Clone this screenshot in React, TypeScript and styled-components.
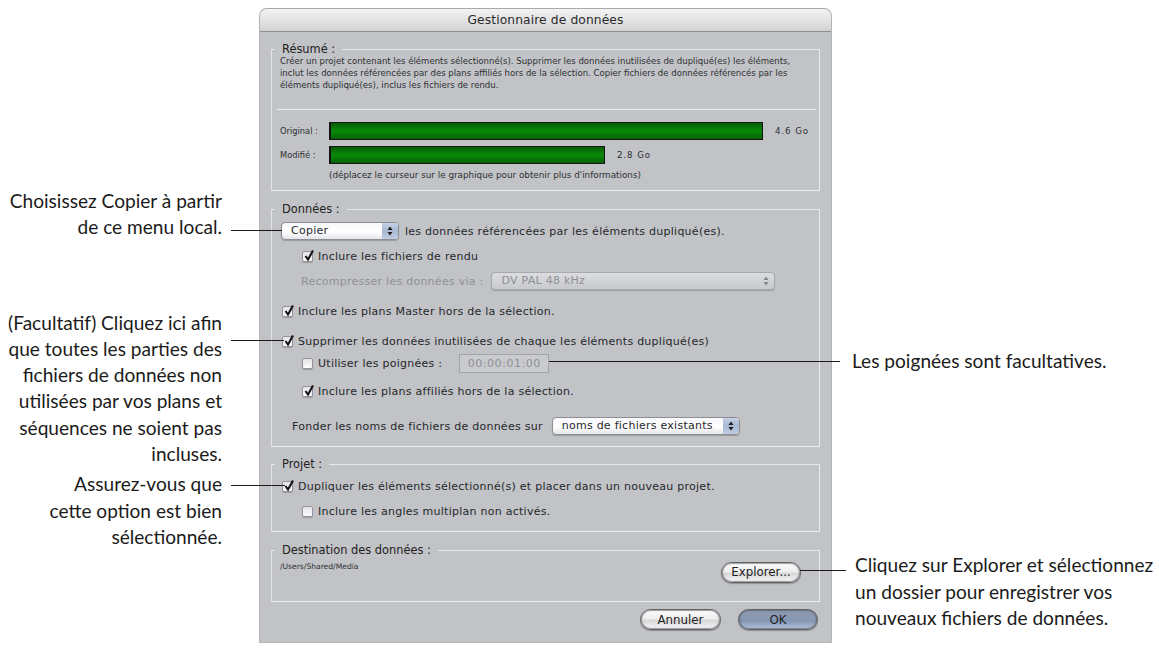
import React from "react";
import styled, { createGlobalStyle } from "styled-components";

const Global = createGlobalStyle`
  html, body { margin: 0; padding: 0; background: #fff; }
  #root { width: 1159px; height: 648px; overflow: hidden; }
`;

const Page = styled.div`
  position: relative;
  display: flex;
  align-items: flex-start;
  width: 1159px;
  height: 648px;
  font-family: "DejaVu Sans", sans-serif;
  color: #26282b;
`;

const LeftColumn = styled.div`
  width: 222px;
  flex: none;
  text-align: right;
`;

const RightColumn = styled.div`
  margin-left: 20px;
  flex: none;
`;

const Caption = styled.p<{ $top: number; $indent?: number }>`
  margin: ${(p) => p.$top}px 0 0 ${(p) => p.$indent ?? 0}px;
  font-family: "Lato", sans-serif;
  font-size: 19.1px;
  line-height: 26.3px;
  color: #1b1b1b;
  white-space: pre-line;
`;

const Dialog = styled.div`
  flex: none;
  width: 573px;
  height: 635px;
  margin: 8px 0 0 37px;
  box-sizing: border-box;
  background: #c1c3c6;
  border: 1px solid #b4b5b7;
  border-top-color: #a9a9a9;
  border-radius: 8px 8px 0 0;
  overflow: hidden;
`;

const TitleBar = styled.div`
  height: 22px;
  line-height: 22px;
  text-align: center;
  font-size: 12.3px;
  letter-spacing: 0.1px;
  color: #2b2b2b;
  background: linear-gradient(#f4f4f4, #d2d3d4);
  border-bottom: 1px solid #8e8f91;
`;

const Body = styled.div`
  padding: 0 11px;
`;

const Group = styled.fieldset<{ $top: number; $height: number }>`
  box-sizing: border-box;
  height: ${(p) => p.$height}px;
  margin: ${(p) => p.$top}px 0 0;
  padding: 0 0 0 8px;
  min-width: 0;
  border: 1px solid #eceded;
  border-top-color: #e6e7e8;
  border-left-color: #e3e4e5;
`;

const Legend = styled.legend`
  margin-left: -5px;
  padding: 0 7px;
  font-size: 11.4px;
  line-height: 14px;
  color: #222;
`;

const Summary = styled.p`
  margin: -1px 0 0;
  width: 530px;
  font-size: 8.55px;
  line-height: 12px;
  color: #2e3033;
`;

const Separator = styled.hr`
  margin: 18px 3px 0 -3px;
  height: 1px;
  border: 0;
  background: #ecedee;
`;

const BarRow = styled.div<{ $top: number }>`
  display: flex;
  align-items: center;
  height: 18px;
  margin-top: ${(p) => p.$top}px;
`;

const BarLabel = styled.span`
  width: 49px;
  flex: none;
  font-size: 8.3px;
  color: #2e3033;
`;

const Bar = styled.div<{ $width: number }>`
  box-sizing: border-box;
  width: ${(p) => p.$width}px;
  height: 18px;
  flex: none;
  background: linear-gradient(#045c04, #0a8a0a 50%, #056205);
  border: 2px solid #141414;
  border-width: 1px 1px 1px 2px;
`;

const BarValue = styled.span`
  margin-left: 12px;
  font-size: 8.7px;
  letter-spacing: 0.9px;
  color: #2e3033;
`;

const Hint = styled.p`
  margin: 5px 0 0 49px;
  font-size: 8.8px;
  line-height: 12px;
  color: #2e3033;
`;

const Row = styled.div<{ $top: number; $indent?: number }>`
  display: flex;
  align-items: center;
  height: 18px;
  margin: ${(p) => p.$top}px 0 0 ${(p) => p.$indent ?? 0}px;
  font-size: 11px;
  letter-spacing: 0.26px;
  white-space: nowrap;
  color: #26282b;
`;

const Dim = styled.span`
  color: #8f9194;
`;

const BoxWrap = styled.span`
  display: flex;
  align-items: center;
  justify-content: center;
  width: 11px;
  height: 11px;
  flex: none;
  margin-right: 5px;
  position: relative;
  background: linear-gradient(#e4e4e6, #fbfbfb);
  border: 1px solid #939598;
  border-radius: 2px;
  box-sizing: border-box;
  box-shadow: 0 1px 1px #9a9c9f;
`;

const CheckMark = styled.svg`
  position: absolute;
  left: 0;
  top: -3px;
  width: 12px;
  height: 13px;
`;

const Check = ({ on }: { on?: boolean }) => (
  <BoxWrap>
    {on && (
      <CheckMark viewBox="0 0 12 13">
        <path d="M2.5 7 L5 10.5 L10 1.5" fill="none" stroke="#141416" strokeWidth="2.1" />
      </CheckMark>
    )}
  </BoxWrap>
);

const SelectBox = styled.div<{ $width: number; $disabled?: boolean }>`
  display: flex;
  align-items: stretch;
  box-sizing: border-box;
  width: ${(p) => p.$width}px;
  height: 18px;
  flex: none;
  overflow: hidden;
  border: 1px solid ${(p) => (p.$disabled ? "#a7a9ac" : "#8d8f92")};
  border-radius: 4px;
  background: ${(p) =>
    p.$disabled ? "linear-gradient(#dcdde0, #c8c9cc)" : "linear-gradient(#f7f8fb, #ffffff 55%, #e4e5ea)"};
  box-shadow: 0 1px 1px #9a9c9f;
  color: ${(p) => (p.$disabled ? "#8f9194" : "#26282b")};
`;

const SelectText = styled.span`
  flex: 1;
  padding-left: 9px;
  line-height: 16px;
`;

const SelectArrows = styled.span<{ $disabled?: boolean }>`
  width: 16px;
  flex: none;
  display: flex;
  align-items: center;
  justify-content: center;
  background: ${(p) =>
    p.$disabled ? "transparent" : "linear-gradient(#c6d1e4, #a7b9d4 50%, #c0cde2)"};
`;

const Select = ({ width, text, disabled }: { width: number; text: string; disabled?: boolean }) => (
  <SelectBox $width={width} $disabled={disabled}>
    <SelectText>{text}</SelectText>
    <SelectArrows $disabled={disabled}>
      <svg width="6" height="10" viewBox="0 0 6 10">
        <path d="M3 0.5 L5.5 4 H0.5 Z M3 9.5 L5.5 6 H0.5 Z" fill={disabled ? "#85878a" : "#1c1c1e"} />
      </svg>
    </SelectArrows>
  </SelectBox>
);

const SelectGap = styled.span<{ $gap: number }>`
  margin-left: ${(p) => p.$gap}px;
`;

const TimeField = styled.div`
  width: 90px;
  height: 19px;
  box-sizing: border-box;
  margin-left: 17px;
  border: 1px solid #a2a4a7;
  background: #c9cbce;
  color: #8f9194;
  text-align: center;
  line-height: 17px;
  letter-spacing: 0.55px;
`;

const PathRow = styled.div`
  display: flex;
  align-items: flex-start;
  justify-content: space-between;
  padding-right: 18px;
  margin-top: 2px;
`;

const PathText = styled.span`
  margin-top: 2px;
  font-size: 7.6px;
  line-height: 12px;
  color: #2e3033;
`;

const ExploreSlot = styled.div`
  margin-top: 2px;
`;

const Pill = styled.button<{ $primary?: boolean; $width: number; $height: number }>`
  box-sizing: border-box;
  width: ${(p) => p.$width}px;
  height: ${(p) => p.$height}px;
  padding: 0;
  border-radius: 999px;
  border: 1px solid #5f6165;
  font-family: inherit;
  font-size: 11.8px;
  color: #1f2022;
  background: ${(p) =>
    p.$primary
      ? "linear-gradient(#8997ac, #8b9ab4 45%, #7f93b2 55%, #b6c4da)"
      : "linear-gradient(#fcfcfc, #eeeeee 45%, #d7d7d9 55%, #f7f7f8)"};
  box-shadow: 0 1px 1px #8e9093, inset 0 0 1px 1px rgba(80, 82, 86, 0.55);
`;

const Footer = styled.div`
  display: flex;
  justify-content: flex-end;
  gap: 17px;
  margin-top: 7px;
  padding-right: 2px;
`;

const Leader = styled.div<{ $x: number; $y: number; $w: number }>`
  position: absolute;
  left: ${(p) => p.$x}px;
  top: ${(p) => p.$y}px;
  width: ${(p) => p.$w}px;
  height: 1px;
  background: #1a1a1a;
`;

export default function App() {
  return (
    <Page>
      <Global />
      <LeftColumn>
        <Caption $top={188}>{"Choisissez Copier à partir\nde ce menu local."}</Caption>
        <Caption $top={69}>
          {"(Facultatif) Cliquez ici afin\nque toutes les parties des\nfichiers de données non\nutilisées par vos plans et\nséquences ne soient pas\nincluses."}
        </Caption>
        <Caption $top={4}>{"Assurez-vous que\ncette option est bien\nsélectionnée."}</Caption>
      </LeftColumn>
      <Dialog>
        <TitleBar>Gestionnaire de données</TitleBar>
        <Body>
          <Group $top={10} $height={149}>
            <Legend>Résumé :</Legend>
            <Summary>
              Créer un projet contenant les éléments sélectionné(s). Supprimer les données inutilisées de dupliqué(es) les éléments,
              inclut les données référencées par des plans affiliés hors de la sélection. Copier fichiers de données référencés par les
              éléments dupliqué(es), inclus les fichiers de rendu.
            </Summary>
            <Separator />
            <BarRow $top={12}>
              <BarLabel>Original :</BarLabel>
              <Bar $width={434} />
              <BarValue>4.6 Go</BarValue>
            </BarRow>
            <BarRow $top={6}>
              <BarLabel>Modifié :</BarLabel>
              <Bar $width={276} />
              <BarValue>2.8 Go</BarValue>
            </BarRow>
            <Hint>(déplacez le curseur sur le graphique pour obtenir plus d'informations)</Hint>
          </Group>
          <Group $top={11} $height={245}>
            <Legend>Données :</Legend>
            <Row $top={6} $indent={1}>
              <Select width={118} text="Copier" />
              <SelectGap $gap={6}>les données référencées par les éléments dupliqué(es).</SelectGap>
            </Row>
            <Row $top={7} $indent={22}>
              <Check on />
              Inclure les fichiers de rendu
            </Row>
            <Row $top={7} $indent={21}>
              <Dim>Recompresser les données via :</Dim>
              <SelectGap $gap={8} />
              <Select width={284} text="DV PAL 48 kHz" disabled />
            </Row>
            <Row $top={12} $indent={2}>
              <Check on />
              Inclure les plans Master hors de la sélection.
            </Row>
            <Row $top={12} $indent={2}>
              <Check on />
              Supprimer les données inutilisées de chaque les éléments dupliqué(es)
            </Row>
            <Row $top={4} $indent={22}>
              <Check />
              Utiliser les poignées :
              <TimeField>00:00:01:00</TimeField>
            </Row>
            <Row $top={10} $indent={22}>
              <Check on />
              Inclure les plans affiliés hors de la sélection.
            </Row>
            <Row $top={17} $indent={12}>
              Fonder les noms de fichiers de données sur
              <SelectGap $gap={9} />
              <Select width={188} text="noms de fichiers existants" />
            </Row>
          </Group>
          <Group $top={10} $height={75}>
            <Legend>Projet :</Legend>
            <Row $top={6} $indent={2}>
              <Check on />
              Dupliquer les éléments sélectionné(s) et placer dans un nouveau projet.
            </Row>
            <Row $top={7} $indent={22}>
              <Check />
              Inclure les angles multiplan non activés.
            </Row>
          </Group>
          <Group $top={11} $height={59}>
            <Legend>Destination des données :</Legend>
            <PathRow>
              <PathText>/Users/Shared/Media</PathText>
              <ExploreSlot>
                <Pill $width={80} $height={21}>Explorer...</Pill>
              </ExploreSlot>
            </PathRow>
          </Group>
          <Footer>
            <Pill $width={81} $height={21}>Annuler</Pill>
            <Pill $primary $width={80} $height={21}>OK</Pill>
          </Footer>
        </Body>
      </Dialog>
      <RightColumn>
        <Caption $top={348}>Les poignées sont facultatives.</Caption>
        <Caption $top={178} $indent={3}>
          {"Cliquez sur Explorer et sélectionnez\nun dossier pour enregistrer vos\nnouveaux fichiers de données."}
        </Caption>
      </RightColumn>
      <Leader $x={231} $y={230} $w={51} />
      <Leader $x={231} $y={340} $w={53} />
      <Leader $x={231} $y={485} $w={54} />
      <Leader $x={549} $y={361} $w={291} />
      <Leader $x={800} $y={570} $w={46} />
    </Page>
  );
}
